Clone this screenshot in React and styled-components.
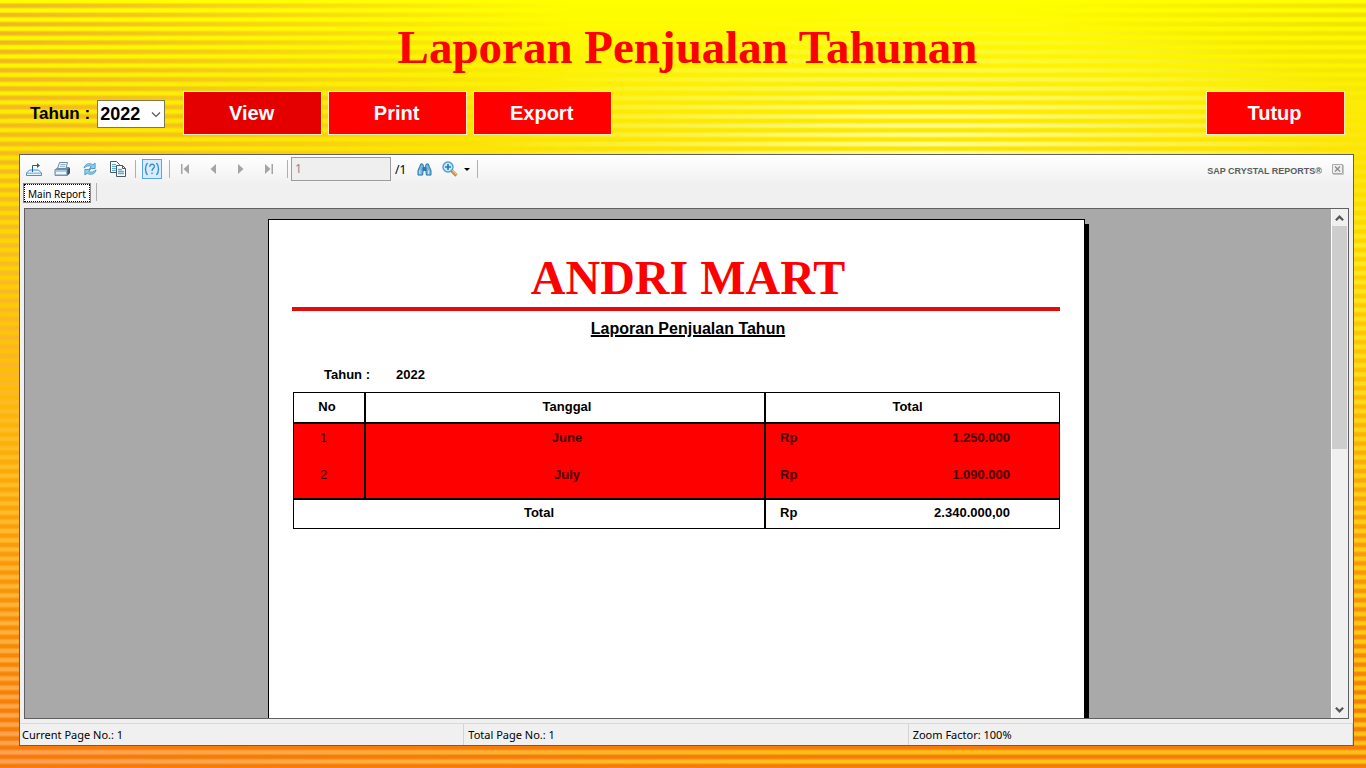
import React from "react";
import styled, { createGlobalStyle } from "styled-components";

const GlobalStyle = createGlobalStyle`
  *, *::before, *::after { box-sizing: border-box; }
  body { margin: 0; font-family: "Liberation Sans", Arial, sans-serif; color: #000; }
  button, input, select { font: inherit; color: inherit; margin: 0; border-radius: 0; }
`;

const Screen = styled.main`
  position: relative;
  isolation: isolate;
  display: flex;
  flex-direction: column;
  min-height: 100vh;
  padding: 0 12px 22px 19px;
  background: linear-gradient(to bottom, #ffff00 0%, #fcee04 12%, #fddc00 26%, #fcc008 48%, #f9a00c 68%, #f58008 92%, #f57a0c 100%);

  &::before {
    content: "";
    position: absolute;
    inset: 0;
    z-index: -1;
    background:
      radial-gradient(ellipse 46% 50% at -4% 4%, #eeb024 0%, #eeb02400 100%),
      radial-gradient(ellipse 34% 18% at 68% 19%, #ffff98 0%, #ffff9800 100%),
      radial-gradient(ellipse 28% 14% at 104% 2%, #eede00 0%, #eede0000 100%),
      radial-gradient(ellipse 60% 45% at 0% 104%, #ff9c5c 0%, #ff9c5c00 100%),
      radial-gradient(ellipse 40% 40% at 0% 46%, #ffb428 0%, #ffb42800 100%),
      linear-gradient(to bottom, #ffe82000 16%, #ffe820 32%, #ffd018 60%, #ffc014 100%);
    mask-image: repeating-linear-gradient(to bottom, transparent 0%, transparent 0.3%, #000 0.6%, #000 0.9%, transparent 1.2%);
  }
`;

const Title = styled.h1`
  margin: 0;
  padding: 20px 0 16px 2px;
  font: bold 47px/55px "Liberation Serif", "Times New Roman", serif;
  color: #f00;
  text-align: center;
`;

const Controls = styled.div`
  display: flex;
  align-items: center;
  gap: 6px;
  padding: 0 9px 19px 11px;
`;

const YearLabel = styled.label`
  padding: 2px 1px 0 0;
  font-size: 17px;
  line-height: 24px;
  font-weight: bold;
`;

const SelectWrap = styled.span`
  position: relative;
  display: flex;
  padding-top: 2px;
  margin-right: 12px;

  svg { position: absolute; right: 4px; top: 14px; pointer-events: none; }
`;

const YearSelect = styled.select`
  appearance: none;
  width: 68px;
  height: 28px;
  padding: 0 0 0 2px;
  border: 1px solid #7a7a4a;
  background: #fff;
  font-size: 18px;
  font-weight: bold;
`;

const ActionButton = styled.button`
  width: 139px;
  height: 44px;
  padding: 0 2px 0 0;
  margin-left: ${(p) => (p.$end ? "auto" : "0")};
  border: 1px solid #fff0c0;
  background: ${(p) => (p.$active ? "#e50000" : "#f00")};
  color: #fff;
  font-size: 20px;
  font-weight: bold;
`;

const Viewer = styled.section`
  display: flex;
  flex-direction: column;
  flex: 1;
  border: 1px solid #606060;
  background: #f0f0f0;
  font-family: "Noto Sans", Tahoma, sans-serif;
  font-size: 12px;
`;

const Toolbar = styled.div`
  display: flex;
  align-items: center;
  height: 28px;
  background: linear-gradient(#fff, #f1f1f1);
`;

const ToolButton = styled.button`
  display: flex;
  align-items: center;
  justify-content: center;
  width: ${(p) => (p.$wide ? "36px" : "28px")};
  height: 24px;
  padding: 0;
  border: 0;
  background: none;
`;

const HelpButton = styled(ToolButton)`
  width: 20px;
  height: 20px;
  margin: 0 4px 0 3px;
  border: 1px solid #58a6e8;
  background: #d9ecfc;
  color: #2f83cc;
`;

const Divider = styled.span`
  width: 1px;
  height: 18px;
  margin: 0 ${(p) => (p.$tight ? "3px" : "0")};
  background: #b0b0b0;
`;

const NavGroup = styled.div`
  display: flex;
  margin: 0 1px 0 -2px;
`;

const PageInput = styled.input`
  width: 100px;
  height: 24px;
  padding: 0 3px 2px;
  border: 1px solid #9c9c9c;
  background: #efefef;
  color: #8a8a8a;
`;

const PageCount = styled.span`
  width: 19px;
  padding-left: 4px;
`;

const Brand = styled.span`
  margin-left: auto;
  padding-top: 3px;
  font: bold 9px/12px "Liberation Sans", Arial, sans-serif;
  color: #5c5c5c;
`;

const CloseButton = styled(ToolButton)`
  width: 12px;
  height: 12px;
  margin: 0 9px 0 10px;
`;

const Tabs = styled.div`
  display: flex;
  padding: 0 3px 3px;
`;

const Tab = styled.button`
  height: 20px;
  margin: 0 5px 2px 0;
  padding: 1px 4px 0;
  border: 1px solid #888;
  outline: 1px dotted #000;
  outline-offset: -2px;
  background: #fff;
  font-size: 10px;
  line-height: 16px;
`;

const Canvas = styled.div`
  display: flex;
  flex: 1;
  margin: 0 4px 4px;
  border: 1px solid #606060;
  background: #a9a9a9;
`;

const PageArea = styled.div`
  display: flex;
  flex: 1;
  justify-content: center;
  padding-top: 10px;
`;

const Scrollbar = styled.div`
  display: flex;
  flex-direction: column;
  width: 17px;
  border-left: 1px solid #fff;
  background: #f0f0f0;
`;

const ScrollButton = styled.button`
  display: flex;
  align-items: center;
  justify-content: center;
  height: 17px;
  padding: 0 1px 0 0;
  border: 0;
  background: none;
`;

const ScrollTrack = styled.div`
  flex: 1;
  padding-right: 1px;
`;

const ScrollThumb = styled.div`
  height: 47%;
  background: #cdcdcd;
`;

const Paper = styled.article`
  width: 817px;
  margin-right: 3px;
  padding: 30px 24px 0 23px;
  border: 1px solid #000;
  border-bottom: 0;
  background: #fff;
  /* hard page shadow along the right edge */
  box-shadow: 4px 5px 0 #000;
  clip-path: inset(0 -4px 0 0);
  font-family: "Liberation Sans", Arial, sans-serif;
  font-size: 13px;
  font-weight: bold;
`;

const StoreName = styled.h2`
  margin: 0;
  padding: 0 0 2px 24px;
  border-bottom: 4px solid #e60a0a;
  font: bold 48px/55px "Liberation Serif", "Times New Roman", serif;
  color: #f00;
  text-align: center;
`;

const ReportTitle = styled.h3`
  margin: 0;
  padding: 8px 0 28px 24px;
  font-size: 16px;
  line-height: 20px;
  text-align: center;
  text-decoration: underline;
  text-decoration-thickness: 2px;
`;

const Period = styled.p`
  display: flex;
  gap: 26px;
  margin: 0;
  padding: 0 0 9px 32px;
  line-height: 16px;
`;

const TableFrame = styled.div`
  margin-left: 1px;
  border: 1px solid #000;
`;

const ReportTable = styled.table`
  width: 100%;
  table-layout: fixed;
  border-collapse: separate;
  border-spacing: 0;
  line-height: 16px;
`;

const HeadCell = styled.th`
  height: 31px;
  width: ${(p) => p.$width || "auto"};
  padding: ${(p) => (p.$first ? "0 4px 2px 0" : p.$end ? "0 10px 2px 0" : "0 0 2px 4px")};
  border-left: ${(p) => (p.$first ? "0" : "2px solid #000")};
  border-bottom: 2px solid #000;
`;

const Cell = styled.td`
  height: ${(p) => (p.$total ? "28px" : p.$last ? "39px" : "37px")};
  padding: ${(p) => (p.$money ? "6px 49px 0 14px" : "6px 0 0 4px")};
  border-left: 2px solid #000;
  border-bottom: ${(p) => (p.$last ? "2px solid #000" : "0")};
  vertical-align: top;
  text-align: center;
  font-weight: ${(p) => (p.$plain ? "normal" : "bold")};
  color: ${(p) => (p.$total ? "#000" : "#400000")};
  ${(p) => p.$first && "border-left: 0; padding: 6px 11px 0 0;"}
  ${(p) => p.$total && "padding-top: 5px;"}
  ${(p) => p.$total && !p.$money && "border-left: 0; padding-left: 20px;"}
`;

const Body = styled.tbody`
  background: #f00;
`;

const Money = styled.span`
  display: flex;
  justify-content: space-between;
`;

const StatusBar = styled.footer`
  display: grid;
  grid-template-columns: 1fr 1fr 1fr;
  border-top: 1px solid #d8d8d8;
  font-size: 11px;
`;

const StatusItem = styled.span`
  padding: 2px;
  line-height: 17px;
  border-right: 1px solid #d4d4d4;

  & + & { padding-left: 4px; }
`;

const ChevronIcon = ({ up, small }) => (
  <svg width={small ? 9 : 10} height="6" viewBox="0 0 10 6" aria-hidden="true">
    <path d={up ? "M1 5.5 5 1.5 9 5.5" : "M1 .5 5 4.5 9 .5"} fill="none" stroke="#555" strokeWidth={small ? 2.4 : 1.2} />
  </svg>
);

const ExportIcon = () => (
  <svg width="16" height="16" viewBox="0 0 16 16" fill="none" aria-hidden="true">
    <path d="M3.500 9h9L15.500 12v2.500H.5V12z" fill="#e7f5ff" stroke="#3f93cf" />
    <path d="M.5 12.200h15" stroke="#62acd9" />
    <path d="M6.500 11V4.500h6" stroke="#20618e" />
    <path d="m11 2 3 2.500-3 2.500z" fill="#20618e" />
  </svg>
);

const PrintIcon = () => (
  <svg width="17" height="16" viewBox="0 0 17 16" fill="none" aria-hidden="true">
    <path d="M1 8.500 4 6h11l1 1v5l-3 3H1z" fill="#73879c" />
    <path d="M5.500 1.500h8l-1.500 6H3.500z" fill="#e5f2fb" stroke="#718ca7" />
    <path d="M6.500 3.500h5M6 5.300h5" stroke="#8fb8d8" />
    <path d="M1 8.500h12v6H1z" fill="#a9c9e3" stroke="#7890a8" />
    <path d="M2 11h10v2H2z" fill="#f2f7fb" />
    <path d="M13.500 8.500 16 6.800V12l-2.500 2.500z" fill="#3f5368" />
  </svg>
);

const RefreshIcon = () => (
  <svg width="14" height="14" viewBox="0 0 15 15" aria-hidden="true">
    <path d="M1 6.500C2 2 6.500.5 10.500 3L13 1.200V7H7l2-2C6.500 3.400 4 4 1 6.500z" fill="#91d1ee" stroke="#2c88bd" strokeWidth=".8" />
    <path d="M14 8.500C13 13 8.500 14.500 4.500 12L2 13.800V8H8l-2 2c2.500 1.600 5 1 8-1.500z" fill="#91d1ee" stroke="#2c88bd" strokeWidth=".8" />
  </svg>
);

const CopyIcon = () => (
  <svg width="18" height="18" viewBox="0 0 18 18" aria-hidden="true">
    <path d="M1.500 1.500h6l3 3v8h-9z" fill="#fff" stroke="#4b5660" />
    <path d="M3 4.500h4M3 6.500h5M3 8.500h4M3 10.500h4" stroke="#5aaede" />
    <path d="M7.500 5.500h6l3 3v8h-9z" fill="#fff" stroke="#4b5660" />
    <path d="M13.500 5.500v3h3" fill="none" stroke="#4b5660" />
    <path d="M9 9.500h4M9 11.500h6M9 13.500h6" stroke="#5aaede" strokeWidth="1.300" />
  </svg>
);

const HelpIcon = () => (
  <svg width="16" height="14" viewBox="0 0 16 14" fill="none" stroke="#3b8ed4" strokeWidth="1.400" aria-hidden="true">
    <path d="M3.500 1C.8 4 .8 10 3.500 13M12.500 1c2.700 3 2.700 9 0 12M5.700 4.800c0-3.500 4.800-3.300 4.800-.5C10.500 6.500 8 6.300 8 9M8 10.500V12" />
  </svg>
);

const NavIcon = ({ back, edge }) => (
  <svg width="10" height="10" viewBox="0 0 10 10" fill="#a4a4a4" aria-hidden="true">
    <g transform={back ? "translate(10 0) scale(-1 1)" : undefined}>
      <path d={edge ? "M1 0 6.500 5 1 10z" : "M2 0 7.500 5 2 10z"} />
      {edge && <path d="M7.500 0H9v10H7.500z" />}
    </g>
  </svg>
);

const FindIcon = () => (
  <svg width="15" height="13" viewBox="0 0 16 14" fill="#72b7df" stroke="#246d9e" aria-hidden="true">
    <path d="M3 3.500 4 1h2l1 2.500L6 13H1V8zM13 3.500 12 1h-2L9 3.500 10 13h5V8z" />
    <path d="M6.500 5h3v3h-3z" fill="#3b7fa9" />
    <path d="M3 8v4M12.500 8v4" stroke="#dbf2ff" />
  </svg>
);

const ZoomIcon = () => (
  <svg width="28" height="16" viewBox="0 0 28 16" aria-hidden="true">
    <path d="m9.500 9.500 5 5" stroke="#c88444" strokeWidth="3.200" />
    <path d="m10 9 4.500 4.500" stroke="#f2c384" strokeWidth="1.400" />
    <circle cx="6" cy="6" r="5" fill="#c9e9fc" stroke="#4b9fd6" strokeWidth="1.400" />
    <path d="M3 6h6M6 3v6" stroke="#2779b4" strokeWidth="1.600" />
    <path d="M22 7h6l-3 3z" fill="#000" />
  </svg>
);

const CloseIcon = () => (
  <svg width="12" height="11" viewBox="0 0 12 11" fill="none" stroke="#aaa" aria-hidden="true">
    <path d="M.5.5h10v9H.5z" fill="#eee" />
    <path d="M11.500 1v9.500H1" stroke="#c4c4c4" />
    <path d="m3 2.500 5 5M8 2.500l-5 5" stroke="#8b8b8b" strokeWidth="1.300" />
  </svg>
);

const rows = [
  { no: 1, month: "June", total: "1.250.000" },
  { no: 2, month: "July", total: "1.090.000" },
];

export default function App() {
  return (
    <Screen>
      <GlobalStyle />
      <Title>Laporan Penjualan Tahunan</Title>
      <Controls>
        <YearLabel htmlFor="year">Tahun :</YearLabel>
        <SelectWrap>
          <YearSelect id="year" defaultValue="2022">
            <option>2022</option>
          </YearSelect>
          <ChevronIcon />
        </SelectWrap>
        <ActionButton $active>View</ActionButton>
        <ActionButton>Print</ActionButton>
        <ActionButton>Export</ActionButton>
        <ActionButton $end>Tutup</ActionButton>
      </Controls>

      <Viewer>
        <Toolbar>
          <ToolButton aria-label="Export report"><ExportIcon /></ToolButton>
          <ToolButton aria-label="Print report"><PrintIcon /></ToolButton>
          <ToolButton aria-label="Refresh"><RefreshIcon /></ToolButton>
          <ToolButton aria-label="Copy"><CopyIcon /></ToolButton>
          <Divider $tight />
          <HelpButton aria-label="Help"><HelpIcon /></HelpButton>
          <Divider $tight />
          <NavGroup>
            <ToolButton aria-label="First page"><NavIcon back edge /></ToolButton>
            <ToolButton aria-label="Previous page"><NavIcon back /></ToolButton>
            <ToolButton aria-label="Next page"><NavIcon /></ToolButton>
            <ToolButton aria-label="Last page"><NavIcon edge /></ToolButton>
          </NavGroup>
          <Divider $tight />
          <PageInput aria-label="Page number" defaultValue="1" disabled />
          <PageCount>/1</PageCount>
          <ToolButton aria-label="Find text"><FindIcon /></ToolButton>
          <ToolButton $wide aria-label="Zoom"><ZoomIcon /></ToolButton>
          <Divider $tight />
          <Brand>SAP CRYSTAL REPORTS®</Brand>
          <CloseButton aria-label="Close view"><CloseIcon /></CloseButton>
        </Toolbar>
        <Tabs>
          <Tab>Main Report</Tab>
          <Divider />
        </Tabs>

        <Canvas>
          <PageArea>
            <Paper>
              <StoreName>ANDRI MART</StoreName>
              <ReportTitle>Laporan Penjualan Tahun</ReportTitle>
              <Period>
                <span>Tahun :</span>
                <span>2022</span>
              </Period>
              <TableFrame>
                <ReportTable>
                  <thead>
                    <tr>
                      <HeadCell $first $width="70px">No</HeadCell>
                      <HeadCell>Tanggal</HeadCell>
                      <HeadCell $end $width="295px">Total</HeadCell>
                    </tr>
                  </thead>
                  <Body>
                    {rows.map((row, i) => {
                      const last = i === rows.length - 1;
                      return (
                        <tr key={row.no}>
                          <Cell $first $plain $last={last}>{row.no}</Cell>
                          <Cell $last={last}>{row.month}</Cell>
                          <Cell $money $last={last}><Money><span>Rp</span><span>{row.total}</span></Money></Cell>
                        </tr>
                      );
                    })}
                  </Body>
                  <tfoot>
                    <tr>
                      <Cell $total colSpan={2}>Total</Cell>
                      <Cell $total $money><Money><span>Rp</span><span>2.340.000,00</span></Money></Cell>
                    </tr>
                  </tfoot>
                </ReportTable>
              </TableFrame>
            </Paper>
          </PageArea>
          <Scrollbar>
            <ScrollButton aria-label="Scroll up"><ChevronIcon up small /></ScrollButton>
            <ScrollTrack><ScrollThumb /></ScrollTrack>
            <ScrollButton aria-label="Scroll down"><ChevronIcon small /></ScrollButton>
          </Scrollbar>
        </Canvas>

        <StatusBar>
          <StatusItem>Current Page No.: 1</StatusItem>
          <StatusItem>Total Page No.: 1</StatusItem>
          <StatusItem>Zoom Factor: 100%</StatusItem>
        </StatusBar>
      </Viewer>
    </Screen>
  );
}
